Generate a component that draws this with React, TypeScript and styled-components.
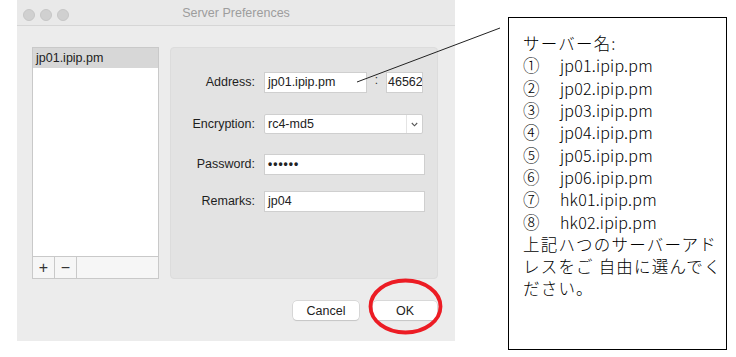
import { styled, createGlobalStyle } from "styled-components";

const Global = createGlobalStyle`
	html, body {
		margin: 0;
		padding: 0;
		background: #fff;
	}
	body {
		font-family: "Liberation Sans", Arial, sans-serif;
	}
`;

const Page = styled.div`
	position: relative;
	display: flex;
	align-items: flex-start;
	width: 736px;
	height: 357px;
	padding-left: 17px;
	box-sizing: border-box;
	overflow: hidden;
`;

const Window = styled.div`
	display: flex;
	flex-direction: column;
	width: 438px;
	height: 341px;
	background: #ececec;
`;

const TitleBar = styled.div`
	position: relative;
	display: flex;
	align-items: center;
	justify-content: center;
	height: 26px;
	box-sizing: border-box;
	border-bottom: 1px solid #d6d6d6;
	background: #e9e9e9;
`;

const Lights = styled.div`
	position: absolute;
	left: 6px;
	top: 9px;
	display: flex;
	gap: 5px;
`;

const Light = styled.span`
	width: 12px;
	height: 12px;
	border-radius: 50%;
	background: #d0d0d0;
	border: 1px solid #c6c6c6;
	box-sizing: border-box;
`;

const Title = styled.span`
	font-size: 12.5px;
	color: #9d9d9d;
`;

const Body = styled.div`
	display: flex;
	gap: 11px;
	padding: 21px 17px 0 15px;
`;

const List = styled.div`
	display: flex;
	flex-direction: column;
	width: 127px;
	height: 232px;
	box-sizing: border-box;
	border: 1px solid #c9c9c9;
	background: #fff;
`;

const ListItem = styled.div<{ $selected?: boolean }>`
	height: 20px;
	line-height: 20px;
	padding-left: 3px;
	font-size: 12.5px;
	color: #222;
	background: ${(p) => (p.$selected ? "#d7d7d7" : "transparent")};
`;

const ListSpacer = styled.div`
	flex: 1;
`;

const ListBar = styled.div`
	display: flex;
	height: 21px;
	border-top: 1px solid #c9c9c9;
	background: #f6f6f6;
`;

const BarButton = styled.div`
	display: flex;
	align-items: center;
	justify-content: center;
	width: 21px;
	border-right: 1px solid #c9c9c9;
	font-size: 16px;
	color: #333;
`;

const Panel = styled.div`
	width: 268px;
	height: 232px;
	box-sizing: border-box;
	border: 1px solid #dcdcdc;
	border-radius: 4px;
	background: #e3e3e3;
	padding-top: 23px;
`;

const Row = styled.div<{ $gap?: number }>`
	display: flex;
	align-items: center;
	height: 22px;
	margin-top: ${(p) => p.$gap ?? 0}px;
`;

const Label = styled.div`
	width: 84px;
	margin-right: 9px;
	text-align: right;
	font-size: 12.5px;
	color: #1e1e1e;
`;

const Field = styled.div<{ $w: number; $pad?: number }>`
	display: flex;
	align-items: center;
	width: ${(p) => p.$w}px;
	height: 21px;
	box-sizing: border-box;
	padding-left: ${(p) => p.$pad ?? 3}px;
	border: 1px solid #cfcfcf;
	background: #fff;
	font-size: 12.5px;
	color: #222;
	overflow: hidden;
	white-space: nowrap;
`;

const Colon = styled.div`
	width: 19px;
	text-align: center;
	font-size: 12px;
	color: #333;
	margin-top: -4px;
`;

const Dots = styled.span`
	font-size: 12px;
	letter-spacing: 1px;
	font-weight: bold;
`;

const Select = styled.div`
	display: flex;
	width: 159px;
	height: 20px;
	box-sizing: border-box;
	border: 1px solid #cfcfcf;
	border-radius: 2px;
	background: #fff;
	font-size: 12.5px;
	color: #222;
`;

const SelectValue = styled.div`
	flex: 1;
	display: flex;
	align-items: center;
	padding-left: 3px;
`;

const SelectArrow = styled.div`
	display: flex;
	align-items: center;
	justify-content: center;
	width: 15px;
	border-left: 1px solid #e4e4e4;
`;

const Actions = styled.div`
	display: flex;
	justify-content: flex-end;
	gap: 14px;
	padding: 22px 18px 0 0;
`;

const Button = styled.div<{ $w: number }>`
	display: flex;
	align-items: center;
	justify-content: center;
	width: ${(p) => p.$w}px;
	height: 19px;
	border-radius: 4px;
	background: #fff;
	box-shadow: 0 0 0 0.5px #c4c4c4, 0 1px 1px rgba(0, 0, 0, 0.15);
	font-size: 12.5px;
	color: #222;
`;

const Callout = styled.div`
	width: 219px;
	height: 333px;
	margin: 17px 0 0 53px;
	box-sizing: border-box;
	border: 1px solid #000;
	background: #fff;
	padding: 14px 0 0 14px;
	font-family: "Noto Sans CJK JP", "Liberation Sans", sans-serif;
	font-weight: 300;
	font-size: 16.5px;
	line-height: 22.3px;
	color: #000;
`;

const Line = styled.div`
	height: 22.3px;
	white-space: nowrap;
	letter-spacing: 1.2px;
`;

const Entry = styled.div`
	display: flex;
	align-items: center;
	height: 22.3px;
	white-space: nowrap;
`;

const Num = styled.span`
	width: 37px;
	font-size: 16.5px;
	line-height: 22px;
`;

const Host = styled.span`
	font-size: 16px;
	line-height: 22px;
	letter-spacing: 0.2px;
`;

const Overlay = styled.svg`
	position: absolute;
	left: 0;
	top: 0;
	pointer-events: none;
`;

const hosts = [
	["①", "jp01.ipip.pm"],
	["②", "jp02.ipip.pm"],
	["③", "jp03.ipip.pm"],
	["④", "jp04.ipip.pm"],
	["⑤", "jp05.ipip.pm"],
	["⑥", "jp06.ipip.pm"],
	["⑦", "hk01.ipip.pm"],
	["⑧", "hk02.ipip.pm"],
];

export default function App() {
	return (
		<>
			<Global />
			<Page>
				<Window>
					<TitleBar>
						<Lights>
							<Light />
							<Light />
							<Light />
						</Lights>
						<Title>Server Preferences</Title>
					</TitleBar>
					<Body>
						<List>
							<ListItem $selected>jp01.ipip.pm</ListItem>
							<ListSpacer />
							<ListBar>
								<BarButton>+</BarButton>
								<BarButton>−</BarButton>
							</ListBar>
						</List>
						<Panel>
							<Row>
								<Label>Address:</Label>
								<Field $w={103}>jp01.ipip.pm</Field>
								<Colon>:</Colon>
								<Field $w={37} $pad={1}>46562</Field>
							</Row>
							<Row $gap={20}>
								<Label>Encryption:</Label>
								<Select>
									<SelectValue>rc4-md5</SelectValue>
									<SelectArrow>
										<svg width="7" height="5" viewBox="0 0 7 5">
											<path d="M0.8 1 L3.5 3.8 L6.2 1" fill="none" stroke="#555" strokeWidth="1.1" />
										</svg>
									</SelectArrow>
								</Select>
							</Row>
							<Row $gap={18}>
								<Label>Password:</Label>
								<Field $w={161}>
									<Dots>••••••</Dots>
								</Field>
							</Row>
							<Row $gap={15}>
								<Label>Remarks:</Label>
								<Field $w={161}>jp04</Field>
							</Row>
						</Panel>
					</Body>
					<Actions>
						<Button $w={66}>Cancel</Button>
						<Button $w={64}>OK</Button>
					</Actions>
				</Window>
				<Callout>
					<Line>サーバー名:</Line>
					{hosts.map(([n, h]) => (
						<Entry key={h}>
							<Num>{n}</Num>
							<Host>{h}</Host>
						</Entry>
					))}
					<Line>上記ハつのサーバーアド</Line>
					<Line>レスをご 自由に選んでく</Line>
					<Line>ださい。</Line>
				</Callout>
				<Overlay width="736" height="357">
					<line x1="357" y1="82" x2="500" y2="28" stroke="#222" strokeWidth="1" />
					<ellipse cx="405.5" cy="306.5" rx="35" ry="26" fill="none" stroke="#ec1c24" strokeWidth="3.8" />
				</Overlay>
			</Page>
		</>
	);
}
